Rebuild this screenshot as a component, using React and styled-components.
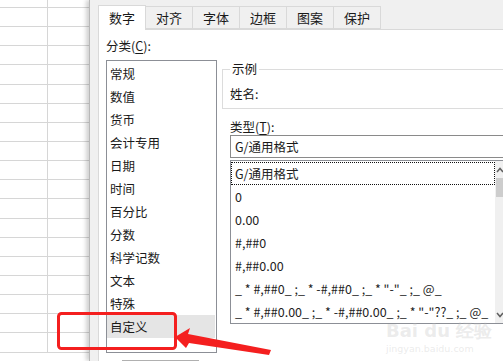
import React from "react";
import styled, { createGlobalStyle } from "styled-components";

const Global = createGlobalStyle`
  html, body { margin: 0; padding: 0; background: #fff; }
  body { font-family: "Noto Sans CJK SC", "Noto Sans", sans-serif; color: #1a1a1a; }
  * { box-sizing: border-box; }
`;

const Screen = styled.div`
  position: relative;
  width: 503px;
  height: 361px;
  overflow: hidden;
  display: flex;
  font-size: 12.5px;
`;

const Sheet = styled.div`
  width: 89px;
  flex: none;
  background: #fff;
  display: grid;
  grid-template-columns: 48px 1fr;
  grid-template-rows: 8px repeat(18, 19.15px);
`;

const Cell = styled.div`
  border-right: ${(p) => (p.$first ? "1px solid #d6d6d6" : "none")};
  border-bottom: 1px solid #d6d6d6;
`;

const Dialog = styled.div`
  flex: 1;
  min-width: 0;
  background: #f0f0f0;
  border-left: 1px solid #b8b8b8;
  box-shadow: -3px 0 4px rgba(0, 0, 0, 0.18);
  padding: 5px 0 0 8px;
  display: flex;
  flex-direction: column;
  position: relative;
  z-index: 1;
`;

const TabStrip = styled.div`
  display: flex;
  align-items: flex-end;
  height: 24px;
  position: relative;
  z-index: 2;
`;

const Tab = styled.div`
  width: 48px;
  height: ${(p) => (p.$active ? "25px" : "23px")};
  margin-left: ${(p) => (p.$first ? "0" : "-1px")};
  margin-bottom: ${(p) => (p.$active ? "-1px" : "0")};
  background: ${(p) => (p.$active ? "#fff" : "#f0f0f0")};
  border: 1px solid #d9d9d9;
  border-bottom: ${(p) => (p.$active ? "none" : "1px solid #d9d9d9")};
  display: flex;
  justify-content: center;
  align-items: ${(p) => (p.$active ? "flex-start" : "center")};
  padding-top: ${(p) => (p.$active ? "4px" : "0")};
  line-height: 16px;
  font-size: 13px;
  color: #1a1a1a;
  position: relative;
  z-index: ${(p) => (p.$active ? 3 : 1)};
`;

const Panel = styled.div`
  flex: 1;
  background: #fff;
  border-top: 1px solid #d9d9d9;
  border-left: 1px solid #d9d9d9;
  display: flex;
  align-items: flex-start;
  padding-left: 7px;
`;

const LeftCol = styled.div`
  width: 111px;
  flex: none;
  display: flex;
  flex-direction: column;
`;

const Label = styled.div`
  line-height: 16px;
  height: 16px;
  font-size: 12.5px;
  margin-top: ${(p) => p.$mt || "0"};
  margin-left: ${(p) => p.$ml || "0"};
  white-space: nowrap;
`;

const U = styled.span`
  text-decoration: underline;
  text-underline-offset: 2px;
`;

const ListBox = styled.div`
  margin-top: 6px;
  height: 293px;
  border: 1px solid #8c8f96;
  padding: 1px 1px 0 0;
  display: flex;
  flex-direction: column;
`;

const CatItem = styled.div`
  height: 23px;
  line-height: 23px;
  padding-left: 3px;
  background: ${(p) => (p.$selected ? "#e5e5e5" : "transparent")};
  font-size: 12.5px;
`;

const ButtonEdge = styled.div`
  margin: 7px 0 0 16px;
  width: 77px;
  border-top: 1px solid #b0b0b0;
`;

const RightCol = styled.div`
  margin-left: 5px;
  margin-top: 31px;
  width: 300px;
  flex: none;
  display: flex;
  flex-direction: column;
`;

const Group = styled.fieldset`
  margin: 0;
  border: 1px solid #dcdcdc;
  padding: 0 0 6px 7px;
  min-width: 0;
  height: 48px;
`;

const Legend = styled.legend`
  padding: 0 2px;
  margin-left: 0;
  line-height: 16px;
  font-size: 12.5px;
`;

const Indent = styled.div`
  margin-left: 8px;
  display: flex;
  flex-direction: column;
`;

const Input = styled.div`
  height: 23px;
  border: 1px solid #8a8a8a;
  border-right: none;
  padding-left: 4px;
  line-height: 21px;
  font-size: 12.5px;
  width: 290px;
`;

const TypeList = styled.div`
  margin-top: 2px;
  height: 164px;
  width: 283px;
  border: 1px solid #8c8f96;
  display: flex;
`;

const TypeItems = styled.div`
  flex: 1;
  min-width: 0;
  padding-top: 1px;
  display: flex;
  flex-direction: column;
`;

const TypeItem = styled.div`
  height: 23px;
  line-height: 21px;
  padding-left: 3px;
  border: 1px ${(p) => (p.$focus ? "dotted #111" : "solid transparent")};
  white-space: pre;
  font-size: 12.5px;
  color: #222;
`;

const Scrollbar = styled.div`
  width: 17px;
  flex: none;
  background: #f0f0f0;
  display: flex;
  flex-direction: column;
  align-items: stretch;
`;

const ScrollArrow = styled.div`
  height: 17px;
  display: flex;
  align-items: center;
  justify-content: flex-start;
  padding-left: 1px;
`;

const Thumb = styled.div`
  height: 19px;
  margin: 0 1px;
  background: #cdcdcd;
`;

const Track = styled.div`
  flex: 1;
`;

const Overlay = styled.svg`
  position: absolute;
  left: 0;
  top: 0;
  pointer-events: none;
  z-index: 10;
`;

const Watermark = styled.div`
  position: absolute;
  left: 386px;
  top: 322px;
  z-index: 9;
  color: rgba(190, 190, 190, 0.3);
  font-family: "DejaVu Sans", sans-serif;
  font-weight: bold;
  pointer-events: none;
  line-height: 1;
`;

const WmBig = styled.div`
  font-size: 18px;
`;

const WmSmall = styled.div`
  font-size: 9.5px;
  margin-top: 4px;
  font-weight: normal;
`;

const tabs = ["数字", "对齐", "字体", "边框", "图案", "保护"];
const cats = ["常规", "数值", "货币", "会计专用", "日期", "时间", "百分比", "分数", "科学记数", "文本", "特殊", "自定义"];
const types = [
  "G/通用格式",
  "0",
  "0.00",
  "#,##0",
  "#,##0.00",
  '_ * #,##0_ ;_ * -#,##0_ ;_ * "-"_ ;_ @_',
  '_ * #,##0.00_ ;_ * -#,##0.00_ ;_ * "-"??_ ;_ @_',
];

const Chevron = ({ up }) => (
  <svg width="8" height="8" viewBox="0 0 8 8">
    <path d={up ? "M1 6 L4 2.5 L7 6" : "M1 2 L4 5.5 L7 2"} fill="none" stroke="#606060" strokeWidth="1.5" />
  </svg>
);

export default function App() {
  const cells = [];
  for (let r = 0; r < 19; r++) {
    cells.push(<Cell key={`a${r}`} $first />);
    cells.push(<Cell key={`b${r}`} />);
  }
  return (
    <>
      <Global />
      <Screen>
        <Sheet>{cells}</Sheet>
        <Dialog>
          <TabStrip>
            {tabs.map((t, i) => (
              <Tab key={t} $active={i === 0} $first={i === 0}>
                {t}
              </Tab>
            ))}
          </TabStrip>
          <Panel>
            <LeftCol>
              <Label $mt="8px">
                分类(<U>C</U>):
              </Label>
              <ListBox>
                {cats.map((c) => (
                  <CatItem key={c} $selected={c === "自定义"}>
                    {c}
                  </CatItem>
                ))}
              </ListBox>
              <ButtonEdge />
            </LeftCol>
            <RightCol>
              <Group>
                <Legend>示例</Legend>
                <Label $mt="9px" $ml="0px">姓名:</Label>
              </Group>
              <Indent>
                <Label $mt="10px">
                  类型(<U>T</U>):
                </Label>
                <Input>G/通用格式</Input>
                <TypeList>
                  <TypeItems>
                    {types.map((t, i) => (
                      <TypeItem key={t} $focus={i === 0}>
                        {t}
                      </TypeItem>
                    ))}
                  </TypeItems>
                  <Scrollbar>
                    <ScrollArrow>
                      <Chevron up />
                    </ScrollArrow>
                    <Thumb />
                    <Track />
                    <ScrollArrow>
                      <Chevron />
                    </ScrollArrow>
                  </Scrollbar>
                </TypeList>
              </Indent>
            </RightCol>
          </Panel>
        </Dialog>
        <Watermark>
          <WmBig>Bai du 经验</WmBig>
          <WmSmall>jingyan.baidu.com</WmSmall>
        </Watermark>
        <Overlay width="503" height="361" viewBox="0 0 503 361">
          <rect x="58.5" y="313.5" width="117" height="35" rx="3" fill="none" stroke="#f41f1f" strokeWidth="3" />
          <polygon
            points="175,337 190,328 188,334 271,350 269,355 189,343 186,348"
            fill="#f41f1f"
          />
        </Overlay>
      </Screen>
    </>
  );
}
